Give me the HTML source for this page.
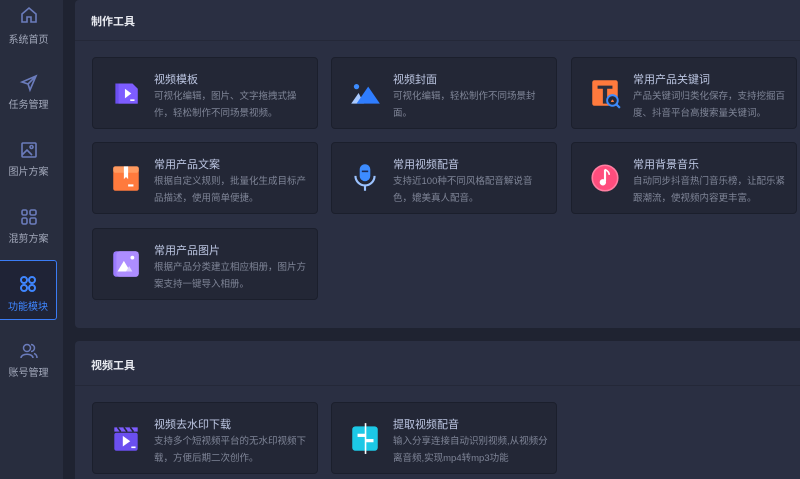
<!DOCTYPE html>
<html><head><meta charset="utf-8">
<style>
*{margin:0;padding:0;box-sizing:border-box}
html,body{width:800px;height:479px;overflow:hidden}
body{background:#1f2331;font-family:"Liberation Sans","Noto Sans CJK SC",sans-serif;position:relative}
.side{position:absolute;left:0;top:0;width:63px;height:479px;background:#282d3e}
.nav{position:absolute;left:0;width:57px;height:60px;text-align:center;color:#a3a9bb;font-size:10px}
.nav svg{position:absolute;left:19px;top:5px}
.nav span{position:absolute;left:0;right:0;top:28px}
.nav.act{border:1.5px solid #3b7cf5;border-left:none;border-radius:0 3px 3px 0;background:#1f2336;color:#3f86ff}
.panel{position:absolute;left:75px;width:740px;background:#2a2f42;border-radius:4px}
.ph{position:absolute;left:16px;font-size:11px;font-weight:bold;color:#e8eaf0}
.line{position:absolute;left:0;right:0;height:1px;background:#242838}
.card{position:absolute;width:226px;height:72px;background:#232736;border:1px solid #1b1f2c;border-radius:4px}
.card .ic{position:absolute;left:16px;top:18px;width:34px;height:34px}
.card h4{position:absolute;left:61px;top:13px;font-size:11px;font-weight:normal;color:#bcc6e2}
.card p{position:absolute;left:61px;top:30px;width:155px;font-size:9.5px;line-height:17px;color:#7f8597}
</style></head><body>
<div class="side">
 <div class="nav" style="top:0"><svg width="20" height="20" viewBox="0 0 20 20" fill="none" stroke="#6b7cbc" stroke-width="1.6"><path d="M3 9 L10 3 L17 9 V17 H12 V12 H8 V17 H3 Z"/></svg><span style="top:31px">系统首页</span></div>
 <div class="nav" style="top:68px"><svg width="20" height="20" viewBox="0 0 20 20" fill="none" stroke="#6b7cbc" stroke-width="1.6"><path d="M17 3 L3 9 L9 11 L11 17 Z M9 11 L17 3"/></svg><span>任务管理</span></div>
 <div class="nav" style="top:135px"><svg width="20" height="20" viewBox="0 0 20 20" fill="none" stroke="#6b7cbc" stroke-width="1.6"><rect x="3" y="3" width="14" height="14" rx="1"/><circle cx="12.5" cy="7" r="1.5"/><path d="M3 15 L8 10 L13 15"/></svg><span>图片方案</span></div>
 <div class="nav" style="top:202px"><svg width="20" height="20" viewBox="0 0 20 20" fill="none" stroke="#6b7cbc" stroke-width="1.6"><rect x="3" y="3" width="5" height="5" rx="1.5"/><rect x="11" y="3" width="6" height="5" rx="1.5"/><rect x="3" y="11" width="5" height="6" rx="1.5"/><rect x="11" y="11" width="6" height="6" rx="1.5"/></svg><span>混剪方案</span></div>
 <div class="nav act" style="top:260px"><svg width="20" height="20" viewBox="0 0 20 20" fill="none" stroke="#3f86ff" stroke-width="2" style="top:13px;left:18px"><circle cx="6" cy="6" r="3"/><circle cx="14" cy="6" r="3"/><circle cx="6" cy="14" r="3"/><circle cx="14" cy="14" r="3"/></svg><span style="top:37px">功能模块</span></div>
 <div class="nav" style="top:336px"><svg width="20" height="20" viewBox="0 0 20 20" fill="none" stroke="#6b7cbc" stroke-width="1.5"><circle cx="8" cy="7" r="3.5"/><path d="M2 17 C2 12 14 12 14 17"/><path d="M12 3.5 A3.5 3.5 0 0 1 12 10.5 M15 12.5 C17 13 18 15 18 17"/></svg><span>账号管理</span></div>
</div>

<div class="panel" style="top:0;height:328px">
 <div class="ph" style="top:13px">制作工具</div>
 <div class="line" style="top:40px"></div>
 <div class="card" style="left:17px;top:57px"><svg class="ic" viewBox="0 0 32 32"><path d="M6 7 H22 L27 12 V26 H6 Z" fill="#6b4ff0"/><path d="M9 7 H22 L27 12 V26 H9 Z" fill="#7d5cff"/><path d="M15 12 L21 16.5 L15 21 Z" fill="#fff"/><rect x="20" y="22" width="4" height="1.5" fill="#fff"/></svg><h4>视频模板</h4><p>可视化编辑，图片、文字拖拽式操作，轻松制作不同场景视频。</p></div>
 <div class="card" style="left:256px;top:57px"><svg class="ic" viewBox="0 0 32 32"><circle cx="8" cy="10" r="2.5" fill="#3d8cff"/><path d="M3 26 L10 16 L15 26 Z" fill="#a9c9ff"/><path d="M8 26 L19 10 L30 26 Z" fill="#2f7dff"/></svg><h4>视频封面</h4><p>可视化编辑，轻松制作不同场景封面。</p></div>
 <div class="card" style="left:496px;top:57px"><svg class="ic" viewBox="0 0 32 32"><rect x="4" y="4" width="24" height="24" rx="2" fill="#ff7a3d"/><path d="M9 9 H23 V12 H18 V26 H14 V12 H9 Z" fill="#2b2f3e"/><circle cx="23" cy="23" r="5" fill="#232736" stroke="#3d8cff" stroke-width="1.8"/><path d="M27 27 L30 30" stroke="#3d8cff" stroke-width="2"/><path d="M21.5 24.5 Q23 20 24.5 24.5 Z" fill="#ff7a3d"/></svg><h4>常用产品关键词</h4><p>产品关键词归类化保存，支持挖掘百度、抖音平台高搜索量关键词。</p></div>
 <div class="card" style="left:17px;top:142px"><svg class="ic" viewBox="0 0 32 32"><rect x="4" y="5" width="24" height="23" rx="2" fill="#ff7a3d"/><rect x="4" y="5" width="24" height="6" rx="2" fill="#ff9a60"/><path d="M14 5 H18 V17 L16 15 L14 17 Z" fill="#fff"/><rect x="18" y="22" width="5" height="2" fill="#fff"/></svg><h4>常用产品文案</h4><p>根据自定义规则，批量化生成目标产品描述，使用简单便捷。</p></div>
 <div class="card" style="left:256px;top:142px"><svg class="ic" viewBox="0 0 32 32"><rect x="11" y="3" width="10" height="16" rx="5" fill="#3d8cff"/><rect x="13" y="9" width="6" height="1.5" fill="#1c2b55"/><path d="M7 14 A9 9 0 0 0 25 14" fill="none" stroke="#9cc3ff" stroke-width="2"/><path d="M16 23 V28" stroke="#9cc3ff" stroke-width="2"/></svg><h4>常用视频配音</h4><p>支持近100种不同风格配音解说音色，媲美真人配音。</p></div>
 <div class="card" style="left:496px;top:142px"><svg class="ic" viewBox="0 0 32 32"><circle cx="16" cy="16" r="12" fill="#ff4d7d"/><circle cx="16" cy="16" r="12" fill="none" stroke="#ff7fa2" stroke-width="1.5"/><path d="M16 8 V19" stroke="#fff" stroke-width="2"/><circle cx="14" cy="20" r="3" fill="#fff"/><path d="M16 8 Q20 10 20 13" stroke="#fff" stroke-width="1.5" fill="none"/></svg><h4>常用背景音乐</h4><p>自动同步抖音热门音乐榜，让配乐紧跟潮流，使视频内容更丰富。</p></div>
 <div class="card" style="left:17px;top:228px"><svg class="ic" viewBox="0 0 32 32"><rect x="4" y="4" width="24" height="24" rx="3" fill="#9b7bff"/><rect x="7" y="4" width="21" height="24" rx="3" fill="#ad8dff"/><path d="M8 23 L14 13 L20 23 Z" fill="#fff"/><path d="M16 23 L19 18 L22 23 Z" fill="#dccfff"/><circle cx="22" cy="10" r="1.8" fill="#fff"/></svg><h4>常用产品图片</h4><p>根据产品分类建立相应相册，图片方案支持一键导入相册。</p></div>
</div>

<div class="panel" style="top:341px;height:160px">
 <div class="ph" style="top:16px">视频工具</div>
 <div class="line" style="top:44px"></div>
 <div class="card" style="left:17px;top:61px"><svg class="ic" viewBox="0 0 32 32"><path d="M5 6 L27 6 L27 10 L5 10 Z" fill="#7d5cff"/><path d="M8 6 L11 10 M14 6 L17 10 M20 6 L23 10" stroke="#232736" stroke-width="1.5"/><rect x="5" y="11" width="22" height="17" rx="2" fill="#6b4ff0"/><path d="M13 14 L20 19 L13 24 Z" fill="#fff"/><rect x="21" y="24" width="4" height="1.5" fill="#fff"/></svg><h4>视频去水印下载</h4><p>支持多个短视频平台的无水印视频下载，方便后期二次创作。</p></div>
 <div class="card" style="left:256px;top:61px"><svg class="ic" viewBox="0 0 32 32"><rect x="4" y="5" width="24" height="23" rx="3" fill="#1cc8e6"/><rect x="9" y="12" width="8" height="3" fill="#fff"/><rect x="17" y="17" width="7" height="3" fill="#fff"/><path d="M16.5 2 V31" stroke="#fff" stroke-width="1.5"/></svg><h4>提取视频配音</h4><p>输入分享连接自动识别视频,从视频分离音频,实现mp4转mp3功能</p></div>
</div>
</body></html>
